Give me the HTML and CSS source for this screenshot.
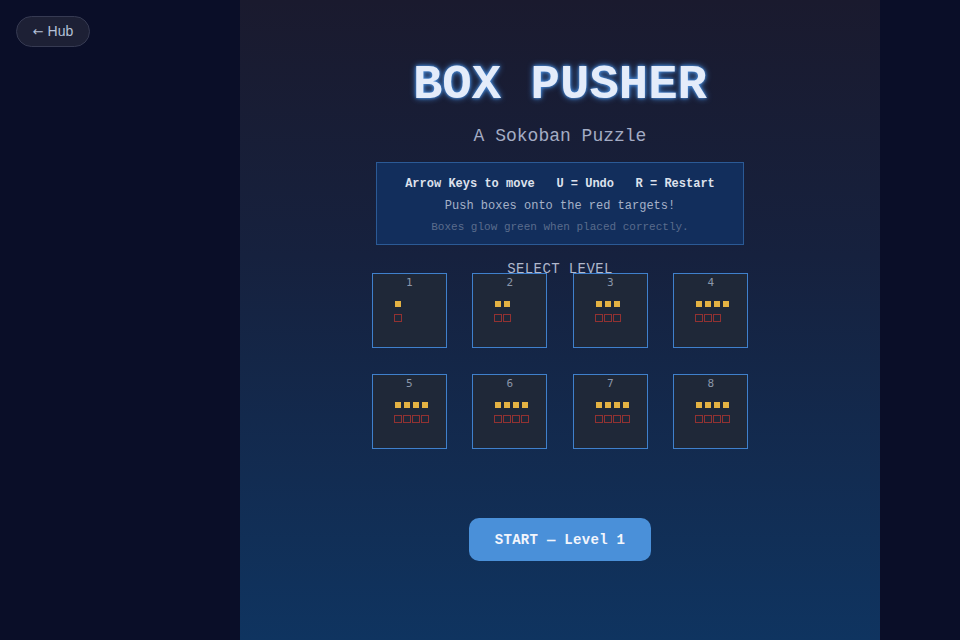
FILE: index.html
```html
<!DOCTYPE html>
<html>
<head>
<meta charset="utf-8">
<link rel="stylesheet" href="styles.css">
</head>
<body>
<a class="hub" href="#"><span class="arrow">←</span> Hub</a>
<main class="panel">
  <h1 class="title">BOX PUSHER</h1>
  <p class="subtitle">A Sokoban Puzzle</p>
  <div class="info">
    <div class="info-keys">Arrow Keys to move&nbsp;&nbsp;&nbsp;U = Undo&nbsp;&nbsp;&nbsp;R = Restart</div>
    <div class="info-goal">Push boxes onto the red targets!</div>
    <div class="info-hint">Boxes glow green when placed correctly.</div>
  </div>
  <div class="select-label">SELECT LEVEL</div>
  <div class="levels">
    <div class="level"><div class="num">1</div><div class="mini"><span class="box"></span></div><div class="mini"><span class="target"></span></div></div>
    <div class="level"><div class="num">2</div><div class="mini"><span class="box"></span><span class="box"></span></div><div class="mini"><span class="target"></span><span class="target"></span></div></div>
    <div class="level"><div class="num">3</div><div class="mini"><span class="box"></span><span class="box"></span><span class="box"></span></div><div class="mini"><span class="target"></span><span class="target"></span><span class="target"></span></div></div>
    <div class="level"><div class="num">4</div><div class="mini"><span class="box"></span><span class="box"></span><span class="box"></span><span class="box"></span></div><div class="mini"><span class="target"></span><span class="target"></span><span class="target"></span></div></div>
    <div class="level"><div class="num">5</div><div class="mini"><span class="box"></span><span class="box"></span><span class="box"></span><span class="box"></span></div><div class="mini"><span class="target"></span><span class="target"></span><span class="target"></span><span class="target"></span></div></div>
    <div class="level"><div class="num">6</div><div class="mini"><span class="box"></span><span class="box"></span><span class="box"></span><span class="box"></span></div><div class="mini"><span class="target"></span><span class="target"></span><span class="target"></span><span class="target"></span></div></div>
    <div class="level"><div class="num">7</div><div class="mini"><span class="box"></span><span class="box"></span><span class="box"></span><span class="box"></span></div><div class="mini"><span class="target"></span><span class="target"></span><span class="target"></span><span class="target"></span></div></div>
    <div class="level"><div class="num">8</div><div class="mini"><span class="box"></span><span class="box"></span><span class="box"></span><span class="box"></span></div><div class="mini"><span class="target"></span><span class="target"></span><span class="target"></span><span class="target"></span></div></div>
  </div>
  <button class="start">START — Level 1</button>
</main>
</body>
</html>
```
FILE: styles.css
```css
* { box-sizing: border-box; }
html, body { margin: 0; padding: 0; height: 100%; }
body {
  background: #0a0e28;
  font-family: "Liberation Mono", "Courier New", monospace;
  overflow: hidden;
}
.hub {
  position: absolute;
  left: 16px;
  top: 16px;
  width: 74px;
  height: 31px;
  border-radius: 16px;
  background: #1d2035;
  border: 1px solid #363a52;
  color: #b4c0d8;
  font-family: "Liberation Sans", Arial, sans-serif;
  font-size: 14px;
  line-height: 29px;
  text-align: center;
  text-decoration: none;
}
.arrow {
  font-family: "DejaVu Sans", sans-serif;
  font-size: 13px;
}
.panel {
  width: 640px;
  height: 640px;
  margin: 0 0 0 240px;
  background: linear-gradient(180deg, #1a1a2e 0%, #16213e 40%, #0f3460 100%);
  display: flex;
  flex-direction: column;
  align-items: center;
  padding-top: 57px;
}
.title {
  margin: 0;
  font-size: 49px;
  line-height: 56px;
  font-weight: bold;
  color: #e4ecfa;
  text-shadow: 0 0 3px #4a90e2, 0 0 6px #4a90e2;
}
.subtitle {
  margin: 12px 0 0;
  font-size: 18px;
  line-height: 22px;
  color: #a4acc4;
}
.info {
  margin-top: 15px;
  width: 368px;
  background: #122e5c;
  border: 1px solid #2b5a96;
  padding: 11px 0 6px;
  text-align: center;
}
.info-keys {
  font-size: 12px;
  line-height: 21px;
  font-weight: bold;
  color: #dde1ec;
}
.info-goal {
  font-size: 12px;
  line-height: 22px;
  color: #a6b2c8;
}
.info-hint {
  font-size: 11px;
  line-height: 21px;
  color: #5a6c8c;
}
.select-label {
  margin-top: 15px;
  font-size: 14px;
  letter-spacing: 0.4px;
  line-height: 18px;
  color: #b0b8cc;
  position: relative;
  z-index: 1;
}
.levels {
  margin-top: -5px;
  display: grid;
  grid-template-columns: repeat(4, 75px);
  column-gap: 25.5px;
  row-gap: 26px;
}
.level {
  height: 75px;
  background: #1f2838;
  border: 1px solid #3f80cc;
  padding: 2px 0 0 21px;
  display: flex;
  flex-direction: column;
}
.num {
  margin-left: -21px;
  text-align: center;
  font-family: "DejaVu Sans Mono", monospace;
  font-size: 11px;
  line-height: 14px;
  color: #8a96aa;
}
.mini {
  display: flex;
  gap: 1px;
  margin-top: 10px;
  height: 8px;
}
.mini + .mini { margin-top: 6px; }
.box {
  width: 8px;
  height: 8px;
  border: 1px solid transparent;
  background: #e3b243;
  background-clip: content-box;
}
.target {
  width: 8px;
  height: 8px;
  border: 1.5px solid #923232;
}
.start {
  margin-top: 69px;
  width: 182px;
  height: 43px;
  border: none;
  border-radius: 10px;
  background: #4a90d9;
  color: #f2f5fc;
  font-family: "Liberation Mono", "Courier New", monospace;
  font-size: 14px;
  letter-spacing: 0.3px;
  font-weight: bold;
}
```
